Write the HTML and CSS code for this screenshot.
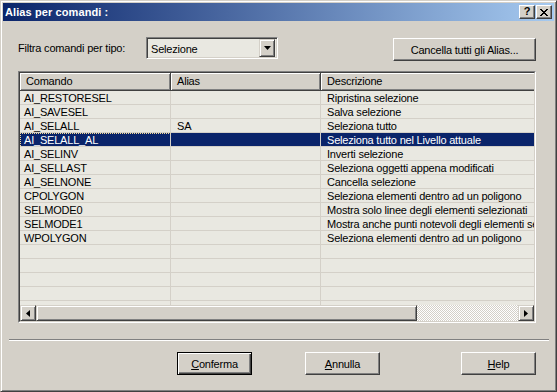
FILE: index.html
```html
<!DOCTYPE html>
<html lang="it">
<head>
  <meta charset="UTF-8" />
  <title>Alias per comandi</title>
  <link rel="stylesheet" href="styles.css">
</head>
<body>
  <div class="window">
    <div class="titlebar">
      <span class="title">Alias per comandi :</span>
      <div class="caption-buttons">
        <span class="cap-btn cap-help">?</span>
        <span class="cap-btn cap-close">
          <svg width="8" height="7" viewBox="0 0 8 7"><path d="M0 0h2v1h1v1h2v-1h1v-1h2v1h-1v1h-1v1h-1v1h1v1h1v1h1v1h-2v-1h-1v-1h-2v1h-1v1h-2v-1h1v-1h1v-1h1v-1h-1v-1h-1v-1h-1z" fill="#000"/></svg>
        </span>
      </div>
    </div>

    <div class="content">
      <div class="filter-row">
        <label class="filter-label">Filtra comandi per tipo:</label>
        <div class="combo">
          <span class="combo-text">Selezione</span>
          <span class="combo-btn">
            <svg width="7" height="4" viewBox="0 0 7 4"><path d="M0 0h7l-3.5 4z" fill="#000"/></svg>
          </span>
        </div>
        <button class="btn btn-clear">Cancella tutti gli Alias...</button>
      </div>

      <div class="listview">
        <div class="list-inner">
          <div class="list-header">
            <span class="hcell col-cmd">Comando</span>
            <span class="hcell col-alias">Alias</span>
            <span class="hcell col-desc">Descrizione</span>
          </div>
          <div class="rows">
            <div class="row"><span class="cell col-cmd">AI_RESTORESEL</span><span class="cell col-alias"></span><span class="cell col-desc">Ripristina selezione</span></div>
            <div class="row"><span class="cell col-cmd">AI_SAVESEL</span><span class="cell col-alias"></span><span class="cell col-desc">Salva selezione</span></div>
            <div class="row"><span class="cell col-cmd">AI_SELALL</span><span class="cell col-alias">SA</span><span class="cell col-desc">Seleziona tutto</span></div>
            <div class="row selected"><span class="cell col-cmd">AI_SELALL_AL</span><span class="cell col-alias"></span><span class="cell col-desc">Seleziona tutto nel Livello attuale</span></div>
            <div class="row"><span class="cell col-cmd">AI_SELINV</span><span class="cell col-alias"></span><span class="cell col-desc">Inverti selezione</span></div>
            <div class="row"><span class="cell col-cmd">AI_SELLAST</span><span class="cell col-alias"></span><span class="cell col-desc">Seleziona oggetti appena modificati</span></div>
            <div class="row"><span class="cell col-cmd">AI_SELNONE</span><span class="cell col-alias"></span><span class="cell col-desc">Cancella selezione</span></div>
            <div class="row"><span class="cell col-cmd">CPOLYGON</span><span class="cell col-alias"></span><span class="cell col-desc">Seleziona elementi dentro ad un poligono</span></div>
            <div class="row"><span class="cell col-cmd">SELMODE0</span><span class="cell col-alias"></span><span class="cell col-desc">Mostra solo linee degli elementi selezionati</span></div>
            <div class="row"><span class="cell col-cmd">SELMODE1</span><span class="cell col-alias"></span><span class="cell col-desc">Mostra anche punti notevoli degli elementi selezionati</span></div>
            <div class="row"><span class="cell col-cmd">WPOLYGON</span><span class="cell col-alias"></span><span class="cell col-desc">Seleziona elementi dentro ad un poligono</span></div>
            <div class="row"><span class="cell col-cmd"></span><span class="cell col-alias"></span><span class="cell col-desc"></span></div>
            <div class="row"><span class="cell col-cmd"></span><span class="cell col-alias"></span><span class="cell col-desc"></span></div>
            <div class="row"><span class="cell col-cmd"></span><span class="cell col-alias"></span><span class="cell col-desc"></span></div>
            <div class="row"><span class="cell col-cmd"></span><span class="cell col-alias"></span><span class="cell col-desc"></span></div>
            <div class="row"><span class="cell col-cmd"></span><span class="cell col-alias"></span><span class="cell col-desc"></span></div>
          </div>
          <div class="hscroll">
            <span class="sb-btn">
              <svg width="4" height="7" viewBox="0 0 4 7"><path d="M4 0v7l-4-3.5z" fill="#000"/></svg>
            </span>
            <span class="sb-thumb"></span>
            <span class="sb-track"></span>
            <span class="sb-btn">
              <svg width="4" height="7" viewBox="0 0 4 7"><path d="M0 0v7l4-3.5z" fill="#000"/></svg>
            </span>
          </div>
        </div>
      </div>
    </div>

    <div class="separator"></div>

    <div class="actions">
      <button class="btn btn-default"><u>C</u>onferma</button>
      <button class="btn btn-cancel"><u>A</u>nnulla</button>
      <button class="btn btn-help"><u>H</u>elp</button>
    </div>
  </div>
</body>
</html>
```

FILE: styles.css
```css
* { box-sizing: border-box; }
body {
  margin: 0;
  background: #d4d0c8;
  font-family: "Liberation Sans", Arial, sans-serif;
  font-size: 11px;
  letter-spacing: -0.2px;
  color: #000;
}
.window {
  width: 557px;
  height: 392px;
  background: #d4d0c8;
  border: 1px solid;
  border-color: #d4d0c8 #404040 #404040 #d4d0c8;
  box-shadow: inset 1px 1px #fff, inset -1px -1px #808080;
  padding: 2px;
}

/* title bar */
.titlebar {
  height: 18px;
  display: flex;
  align-items: center;
  padding: 0 2px 0 2px;
  background: linear-gradient(to right, #0a246a, #a6caf0);
}
.title {
  flex: 1;
  color: #fff;
  font-weight: bold;
  font-size: 11px;
  letter-spacing: 0.1px;
}
.caption-buttons {
  display: flex;
  gap: 1px;
}
.cap-btn {
  width: 16px;
  height: 14px;
  display: flex;
  align-items: center;
  justify-content: center;
  background: #d4d0c8;
  border: 1px solid;
  border-color: #fff #404040 #404040 #fff;
  box-shadow: inset -1px -1px #808080;
  font-weight: bold;
  font-size: 11px;
  line-height: 1;
  letter-spacing: 0;
}
.cap-help { padding-bottom: 1px; }

/* main area */
.content {
  padding: 16px 18px 0 15px;
}
.filter-row {
  display: flex;
  align-items: flex-start;
  height: 24px;
}
.filter-label {
  width: 128px;
  line-height: 23px;
}
.combo {
  width: 132px;
  height: 22px;
  display: flex;
  align-items: center;
  background: #e9e8e1;
  border: 1px solid;
  border-color: #808080 #fff #fff #808080;
  box-shadow: inset 1px 1px #404040, inset -1px -1px #d4d0c8;
  padding: 2px 2px 2px 4px;
}
.combo-text {
  flex: 1;
  padding-top: 1px;
}
.combo-btn {
  width: 16px;
  height: 18px;
  display: flex;
  align-items: center;
  justify-content: center;
  background: #d4d0c8;
  border: 1px solid;
  border-color: #d4d0c8 #404040 #404040 #d4d0c8;
  box-shadow: inset 1px 1px #fff, inset -1px -1px #808080;
}

.btn {
  height: 23px;
  background: #d4d0c8;
  border: 1px solid;
  border-color: #fff #404040 #404040 #fff;
  box-shadow: inset -1px -1px #808080;
  font-family: inherit;
  font-size: 11px;
  letter-spacing: -0.2px;
  color: #000;
  padding: 0;
}
.btn-clear {
  width: 143px;
  margin-left: auto;
  margin-top: 1px;
}

/* list view */
.listview {
  margin-top: 10px;
  width: 518px;
  height: 252px;
  border: 1px solid;
  border-color: #808080 #fff #fff #808080;
  background: #e9e8e1;
}
.list-inner {
  height: 100%;
  border: 1px solid;
  border-color: #404040 #d4d0c8 #d4d0c8 #404040;
  display: flex;
  flex-direction: column;
  overflow: hidden;
}
.list-header {
  display: flex;
  height: 18px;
  flex: none;
}
.hcell {
  flex: none;
  height: 18px;
  line-height: 17px;
  padding-left: 6px;
  background: #d4d0c8;
  border-right: 1px solid #404040;
  border-bottom: 1px solid #404040;
  box-shadow: inset 1px 1px #fff, inset -1px -1px #808080;
  white-space: nowrap;
}
.col-cmd { width: 151px; }
.col-alias { width: 150px; }
.col-desc { width: 320px; }

.rows {
  flex: 1;
  overflow: hidden;
}
.row {
  display: flex;
  height: 14px;
  border-bottom: 1px solid #d4d0c8;
}
.cell {
  flex: none;
  height: 13px;
  line-height: 15px;
  padding-left: 6px;
  border-right: 1px solid #d4d0c8;
  white-space: nowrap;
  overflow: hidden;
}
.row .col-cmd { padding-left: 4px; }
.row.selected {
  background: #0a246a;
  color: #fff;
}
.row.selected .col-cmd {
  border-top: 1px dotted #f5db95;
  border-left: 1px dotted #f5db95;
  line-height: 13px;
  padding-left: 3px;
}

/* horizontal scrollbar */
.hscroll {
  display: flex;
  height: 16px;
  flex: none;
}
.sb-btn, .sb-thumb {
  height: 16px;
  background: #d4d0c8;
  border: 1px solid;
  border-color: #d4d0c8 #404040 #404040 #d4d0c8;
  box-shadow: inset 1px 1px #fff, inset -1px -1px #808080;
}
.sb-btn {
  width: 16px;
  display: flex;
  align-items: center;
  justify-content: center;
}
.sb-thumb { width: 381px; }
.sb-track {
  flex: 1;
  background: repeating-conic-gradient(#fff 0 25%, #d4d0c8 0 50%) 0 0 / 2px 2px;
}

/* bottom */
.separator {
  margin: 16px 5px 0 6px;
  height: 2px;
  border-top: 1px solid #808080;
  border-bottom: 1px solid #fff;
}
.actions {
  display: flex;
  margin-top: 11px;
  padding-left: 174px;
}
.actions .btn { width: 75px; }
.btn-default {
  border: 1px solid #000;
  box-shadow: inset 1px 1px #fff, inset -1px -1px #404040, inset -2px -2px #808080;
}
.btn-cancel { margin-left: 53px; }
.btn-help { margin-left: 81px; }
```
